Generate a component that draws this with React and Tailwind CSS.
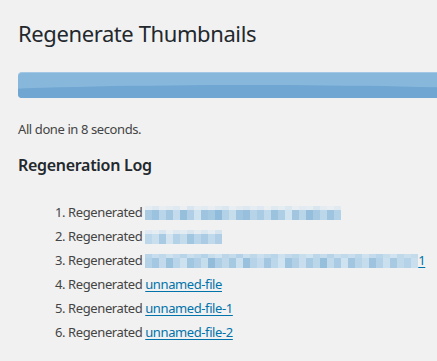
import React from "react";

// pixelated (blurred) filenames, one class per block
const blurRows = [
  {
    top: ["bg-[#e6edf2]", "bg-[#dde8f0]", "bg-[#e9eef2]", "bg-[#e4ecf2]", "bg-[#dfe9f1]", "bg-[#ebeff2]", "bg-[#d9e6ef]", "bg-[#e6edf2]", "bg-[#e2ebf1]", "bg-[#eaeef2]", "bg-[#e0eaf1]", "bg-[#dbe7f0]", "bg-[#e8eef2]", "bg-[#e3ebf1]", "bg-[#dde8f0]", "bg-[#e6edf2]", "bg-[#e0e9f1]", "bg-[#ebeff2]", "bg-[#dfe9f0]", "bg-[#e5ecf2]", "bg-[#dce8f0]", "bg-[#e8eef2]", "bg-[#e2ebf1]", "bg-[#e6edf2]", "bg-[#dae6ef]", "bg-[#e4ecf2]", "bg-[#e9eef2]", "bg-[#e1eaf1]"],
    bottom: ["bg-[#a8cae2]", "bg-[#9bc2de]", "bg-[#b8d5e9]", "bg-[#a3c7e1]", "bg-[#c3dbec]", "bg-[#96bfdc]", "bg-[#b0cfe6]", "bg-[#cfe2ef]", "bg-[#9ec4df]", "bg-[#a6c9e2]", "bg-[#91bbda]", "bg-[#b3d1e7]", "bg-[#c6ddec]", "bg-[#a0c5e0]", "bg-[#98c0dd]", "bg-[#b6d3e8]", "bg-[#a9cbe3]", "bg-[#c0d9eb]", "bg-[#9cc3de]", "bg-[#aecee5]", "bg-[#d0e3f0]", "bg-[#a2c6e0]", "bg-[#b9d6e9]", "bg-[#95bedc]", "bg-[#a7cae2]", "bg-[#bcd7ea]", "bg-[#9fc4df]", "bg-[#b4d2e7]"],
  },
  {
    top: ["bg-[#dfe9f1]", "bg-[#e5ecf2]", "bg-[#dae6ef]", "bg-[#e8eef2]", "bg-[#dde8f0]", "bg-[#e2ebf1]", "bg-[#d8e5ef]", "bg-[#e4ecf2]", "bg-[#dbe7f0]", "bg-[#e6edf2]", "bg-[#d6e4ee]"],
    bottom: ["bg-[#bcd7ea]", "bg-[#c9dfee]", "bg-[#a8cae2]", "bg-[#d3e4f0]", "bg-[#b3d1e7]", "bg-[#c4dbec]", "bg-[#a1c6e0]", "bg-[#b9d5e9]", "bg-[#aacbe3]", "bg-[#c0d9eb]", "bg-[#b0cfe6]"],
  },
  {
    top: ["bg-[#b9d5e9]", "bg-[#c8deee]", "bg-[#bfd9eb]", "bg-[#cde1ef]", "bg-[#c3dbec]", "bg-[#b7d4e8]", "bg-[#cadfee]", "bg-[#c0d9eb]", "bg-[#b5d3e8]", "bg-[#c6ddec]", "bg-[#cfe2ef]", "bg-[#bbd6e9]", "bg-[#c4dbec]", "bg-[#b3d1e7]", "bg-[#c9dfee]", "bg-[#bed8ea]", "bg-[#cbe0ee]", "bg-[#c1daeb]", "bg-[#b8d5e9]", "bg-[#cde1ef]", "bg-[#c2daeb]", "bg-[#bad6e9]", "bg-[#c7deed]", "bg-[#d0e3f0]", "bg-[#bcd7ea]", "bg-[#c5dcec]", "bg-[#b6d3e8]", "bg-[#cadfee]", "bg-[#c0d9eb]", "bg-[#c8deee]", "bg-[#bdd7ea]", "bg-[#cfe2ef]", "bg-[#c3dbec]", "bg-[#b9d5e9]", "bg-[#c6ddec]", "bg-[#d1e3f0]", "bg-[#bfd8ea]", "bg-[#c9dfee]", "bg-[#c4dbec]"],
    bottom: ["bg-[#b4d2e7]", "bg-[#a4c8e1]", "bg-[#c2daeb]", "bg-[#9cc3de]", "bg-[#b9d5e9]", "bg-[#cde1ef]", "bg-[#a1c6e0]", "bg-[#b0cfe6]", "bg-[#c6ddec]", "bg-[#93bcdb]", "bg-[#aecee5]", "bg-[#bed8ea]", "bg-[#a6c9e2]", "bg-[#cae0ee]", "bg-[#99c1dd]", "bg-[#b6d3e8]", "bg-[#c3dbec]", "bg-[#a3c7e1]", "bg-[#bcd7ea]", "bg-[#d0e3f0]", "bg-[#9fc4df]", "bg-[#b1d0e6]", "bg-[#c8deee]", "bg-[#a8cae2]", "bg-[#bad6e9]", "bg-[#96bfdc]", "bg-[#c0d9eb]", "bg-[#aacbe3]", "bg-[#cfe2ef]", "bg-[#a2c6e0]", "bg-[#b7d4e8]", "bg-[#c5dcec]", "bg-[#9dc3df]", "bg-[#b3d1e7]", "bg-[#cbe0ee]", "bg-[#a7cae2]", "bg-[#bfd8ea]", "bg-[#b5d3e8]", "bg-[#c9dfee]"],
  },
];

const Blur = ({ row }) => (
  <span className="inline-block overflow-hidden align-[-3px] h-[14px]">
    <span className="flex">
      {row.top.map((t, i) => (
        <span key={i} className="flex flex-col w-[7px]">
          <span className={`h-[4px] ${t}`} />
          <span className={`h-[10px] ${row.bottom[i]}`} />
        </span>
      ))}
    </span>
  </span>
);

const Link = ({ children }) => (
  <a href="#" className="text-[#0073aa] underline underline-offset-2">
    {children}
  </a>
);

const items = [
  <Blur row={blurRows[0]} />,
  <Blur row={blurRows[1]} />,
  <>
    <Blur row={blurRows[2]} />
    <Link>1</Link>
  </>,
  <Link>unnamed-file</Link>,
  <Link>unnamed-file-1</Link>,
  <Link>unnamed-file-2</Link>,
];

export default function App() {
  return (
    <div
      className="w-[437px] h-[361px] overflow-hidden bg-[#f1f1f1] text-[#444] pl-[18px] pt-[19px]"
      style={{ fontFamily: '"Noto Sans", "Open Sans", sans-serif' }}
    >
      <h1 className="text-[22px] leading-[29px] tracking-[-0.4px] text-[#23282d] font-normal">
        Regenerate Thumbnails
      </h1>

      <div className="relative mt-[24px] w-[460px] h-[26px] rounded-[4px] overflow-hidden bg-[#88b7dc] border-t border-[#a3c8e5]">
        <div className="absolute left-[-170px] top-[12px] w-[800px] h-[40px] rounded-[50%] bg-[#70a6d2]" />
      </div>

      <p className="mt-[22px] text-[13px] leading-[18px] tracking-[-0.4px]">All done in 8 seconds.</p>

      <h2 className="mt-[16px] text-[16px] leading-[22px] tracking-[-0.3px] font-semibold text-[#23282d]">
        Regeneration Log
      </h2>

      <ol className="mt-[24px] ml-[37px] list-decimal list-inside text-[13px] leading-[24px] tracking-[-0.4px]">
        {items.map((content, i) => (
          <li key={i} className="whitespace-nowrap">
            Regenerated {content}
          </li>
        ))}
      </ol>
    </div>
  );
}
